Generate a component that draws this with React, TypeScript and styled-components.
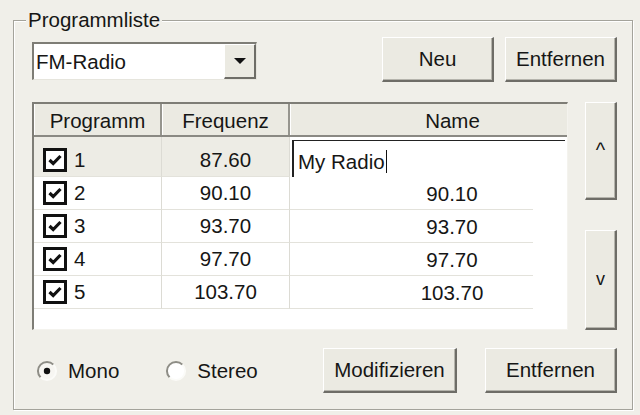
import React from "react";
import styled, { createGlobalStyle } from "styled-components";

const Global = createGlobalStyle`
  html, body { margin: 0; padding: 0; }
  body {
    background: #F0EFE9;
    font-family: "Liberation Sans", Arial, sans-serif;
    color: #161615;
  }
  * { box-sizing: border-box; }
`;

const Page = styled.div`
  width: 640px;
  height: 415px;
  padding: 8px 0 0 13px;
  overflow: hidden;
  background: #F0EFE9;
`;

const Group = styled.fieldset`
  width: 620px;
  margin: 0;
  padding: 5px 15px 16px 18px;
  border: 1px solid #A4A39B;
  box-shadow: inset 1px 1px 0 #ffffff, 1px 1px 0 #ffffff;
`;

const Title = styled.legend`
  font-size: 20.5px;
  line-height: 24px;
  padding: 0 2px;
  margin-left: -6px;
  background: #F0EFE9;
`;

const TopRow = styled.div`
  display: flex;
  align-items: flex-start;
  height: 45px;
  margin-bottom: 20px;
`;

const Combo = styled.div`
  width: 225px;
  height: 38px;
  margin-top: 5px;
  display: flex;
  align-items: stretch;
  background: #ffffff;
  border-top: 2px solid #7E7D76;
  border-left: 2px solid #7E7D76;
  border-right: 1px solid #E6E5DD;
  border-bottom: 1px solid #E6E5DD;
`;

const ComboText = styled.div`
  flex: 1;
  display: flex;
  align-items: center;
  padding-left: 2px;
  font-size: 20.5px;
`;

const ComboButton = styled.div`
  width: 32px;
  display: flex;
  align-items: center;
  justify-content: center;
  background: #EBEAE2;
  border-top: 1px solid #ffffff;
  border-left: 1px solid #ffffff;
  border-right: 2px solid #6E6D67;
  border-bottom: 2px solid #6E6D67;
`;

const Triangle = styled.div`
  width: 0;
  height: 0;
  border-left: 6px solid transparent;
  border-right: 6px solid transparent;
  border-top: 6px solid #111;
`;

const ButtonGroup = styled.div<{ $gap: number }>`
  margin-left: auto;
  display: flex;
  gap: ${(p) => p.$gap}px;
`;

const Button = styled.div<{ $w: number; $h?: number; $size?: number }>`
  width: ${(p) => p.$w}px;
  height: ${(p) => p.$h ?? 45}px;
  display: flex;
  align-items: center;
  justify-content: center;
  font-size: ${(p) => p.$size ?? 20.5}px;
  background: #EBEAE2;
  border-top: 1px solid #ffffff;
  border-left: 1px solid #ffffff;
  border-right: 2px solid #6E6D67;
  border-bottom: 2px solid #6E6D67;
  box-shadow: inset -1px -1px 0 #B5B4AC;
`;

const Middle = styled.div`
  display: flex;
  gap: 17px;
  height: 228px;
  margin-bottom: 18px;
`;

const List = styled.div`
  width: 536px;
  height: 228px;
  overflow: hidden;
  background: #ffffff;
  border-top: 2px solid #7E7D76;
  border-left: 2px solid #7E7D76;
  border-right: 1px solid #F4F3EE;
  border-bottom: 1px solid #F4F3EE;
`;

const Cols = `
  display: grid;
  grid-template-columns: 128px 128px 324px;
  width: 580px;
`;

const Header = styled.div`
  ${Cols}
  height: 33px;
  background: #EBEAE2;
  border-bottom: 2px solid #8A8983;
`;

const HeadCell = styled.div`
  display: flex;
  align-items: center;
  justify-content: center;
  padding-top: 2px;
  font-size: 20.5px;
  border-left: 1px solid #ffffff;
  border-right: 2px solid #96958E;
  &:last-child { border-right: none; }
`;

const Row = styled.div<{ $h: number }>`
  ${Cols}
  height: ${(p) => p.$h}px;
`;

const Cell = styled.div<{ $active?: boolean }>`
  display: flex;
  align-items: center;
  font-size: 20.5px;
  padding-top: ${(p) => (p.$active ? 6 : 0)}px;
  background: ${(p) => (p.$active ? "#EDECE5" : "#ffffff")};
  border-right: 1px solid #DCDBD4;
  border-bottom: 1px solid #E3E2DB;
`;

const CheckCell = styled(Cell)`
  padding-left: 9px;
  gap: 7px;
`;

const FreqCell = styled(Cell)`
  justify-content: center;
`;

const NameCell = styled.div`
  display: flex;
  align-items: center;
  justify-content: center;
  font-size: 20.5px;
  background: linear-gradient(#E3E2DB, #E3E2DB) no-repeat left bottom / 243px 1px;
`;

const EditCell = styled.div`
  display: flex;
  align-items: flex-end;
  padding: 3px 0 0 2px;
`;

const EditBox = styled.div`
  width: 273px;
  height: 37px;
  display: flex;
  align-items: center;
  padding: 5px 0 0 4px;
  font-size: 20.5px;
  background: #ffffff;
  border-top: 1px solid #222;
  border-left: 2px solid #222;
`;

const Caret = styled.span`
  display: inline-block;
  width: 1px;
  height: 23px;
  margin-left: 1px;
  background: #111;
`;

const Box = styled.div`
  width: 24px;
  height: 24px;
  border: 3px solid #111;
  background: #ffffff;
  display: flex;
  align-items: center;
  justify-content: center;
`;

const ArrowCol = styled.div`
  width: 32px;
  display: flex;
  flex-direction: column;
  justify-content: space-between;
`;

const BottomRow = styled.div`
  display: flex;
  align-items: center;
  height: 45px;
`;

const Radios = styled.div`
  display: flex;
  align-items: center;
  gap: 46px;
  margin-left: 4px;
`;

const RadioItem = styled.div`
  display: flex;
  align-items: center;
  gap: 10px;
  font-size: 20.5px;
`;

const Check = () => (
  <Box>
    <svg width="14" height="12" viewBox="0 0 14 12">
      <path d="M1.5 6 L5.2 9.5 L12.5 2" fill="none" stroke="#111" strokeWidth="3.2" />
    </svg>
  </Box>
);

const Radio = ({ on }: { on: boolean }) => (
  <svg width="22" height="22" viewBox="0 0 22 22">
    <circle cx="11" cy="11" r="9" fill={on ? "#F7F6F2" : "#ffffff"} />
    <path d="M4.6 17.4 A9 9 0 0 1 17.4 4.6" fill="none" stroke="#8E8D86" strokeWidth="2" />
    <path d="M17.4 4.6 A9 9 0 0 1 4.6 17.4" fill="none" stroke="#FBFBF8" strokeWidth="2" />
    {on && <circle cx="11" cy="11" r="3.2" fill="#111" />}
  </svg>
);

const rows = [
  { n: 1, f: "87.60" },
  { n: 2, f: "90.10" },
  { n: 3, f: "93.70" },
  { n: 4, f: "97.70" },
  { n: 5, f: "103.70" },
];

export default function App() {
  return (
    <Page>
      <Global />
      <Group>
        <Title>Programmliste</Title>
        <TopRow>
          <Combo>
            <ComboText>FM-Radio</ComboText>
            <ComboButton>
              <Triangle />
            </ComboButton>
          </Combo>
          <ButtonGroup $gap={11}>
            <Button $w={112}>Neu</Button>
            <Button $w={112}>Entfernen</Button>
          </ButtonGroup>
        </TopRow>
        <Middle>
          <List>
            <Header>
              <HeadCell>Programm</HeadCell>
              <HeadCell>Frequenz</HeadCell>
              <HeadCell>Name</HeadCell>
            </Header>
            {rows.map((r, i) => (
              <Row key={r.n} $h={i === 0 ? 40 : 33}>
                <CheckCell $active={i === 0}>
                  <Check />
                  {r.n}
                </CheckCell>
                <FreqCell $active={i === 0}>{r.f}</FreqCell>
                {i === 0 ? (
                  <EditCell>
                    <EditBox>
                      My Radio
                      <Caret />
                    </EditBox>
                  </EditCell>
                ) : (
                  <NameCell>{r.f}</NameCell>
                )}
              </Row>
            ))}
          </List>
          <ArrowCol>
            <Button $w={32} $h={98} $size={20}>^</Button>
            <Button $w={32} $h={100} $size={18}>v</Button>
          </ArrowCol>
        </Middle>
        <BottomRow>
          <Radios>
            <RadioItem>
              <Radio on />
              Mono
            </RadioItem>
            <RadioItem>
              <Radio on={false} />
              Stereo
            </RadioItem>
          </Radios>
          <ButtonGroup $gap={28}>
            <Button $w={134}>Modifizieren</Button>
            <Button $w={132}>Entfernen</Button>
          </ButtonGroup>
        </BottomRow>
      </Group>
    </Page>
  );
}
